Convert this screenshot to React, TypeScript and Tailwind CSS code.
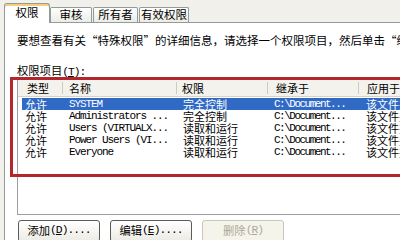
import React from "react";

const rows = [
  { t: "允许", n: "SYSTEM", p: "完全控制", sel: true },
  { t: "允许", n: "Administrators ...", p: "完全控制" },
  { t: "允许", n: "Users (VIRTUALX...", p: "读取和运行" },
  { t: "允许", n: "Power Users (VI...", p: "读取和运行" },
  { t: "允许", n: "Everyone", p: "读取和运行" },
];

function Btn({ label, k, dots, disabled }: { label: string; k: string; dots?: boolean; disabled?: boolean }) {
  return (
    <div
      className={
        "w-[82px] h-[22px] rounded-[3px] border flex items-center justify-center text-[11.3px] leading-none " +
        (disabled
          ? "border-[#c9c7ba] bg-[#f5f4ea] text-[#aca899]"
          : "border-[#5a5a5a] bg-gradient-to-b from-white to-[#ecebe4] text-black")
      }
    >
      <span>{label}</span>
      <span className="font-['Liberation_Mono',monospace] tracking-[-1px]">
        (<span className="underline">{k}</span>){dots ? "...." : ""}
      </span>
    </div>
  );
}

export default function App() {
  return (
    <div className="relative w-[400px] h-[240px] overflow-hidden bg-[#f1f0ea] text-black font-['Noto_Sans_CJK_SC',sans-serif]">
      {/* tab strip */}
      <div className="relative z-10 flex items-end h-[23px] pl-[4px] text-[11.5px] leading-none">
        <div className="w-[46px] h-[20px] bg-white border-x border-t border-[#919b9c] rounded-t-[3px] flex items-center justify-center pb-[1px] shadow-[inset_0_2px_0_#f3cf7a]">
          权限
        </div>
        <div className="w-[42px] h-[15px] mb-[1px] bg-gradient-to-b from-white to-[#ecebe4] border-x border-t border-[#919b9c] rounded-t-[2px] flex items-center justify-center">
          审核
        </div>
        <div className="w-[45px] h-[15px] mb-[1px] ml-[1px] bg-gradient-to-b from-white to-[#ecebe4] border-x border-t border-[#919b9c] rounded-t-[2px] flex items-center justify-center">
          所有者
        </div>
        <div className="w-[50px] h-[15px] mb-[1px] ml-[1px] bg-gradient-to-b from-white to-[#ecebe4] border-x border-t border-[#919b9c] rounded-t-[2px] flex items-center justify-center">
          有效权限
        </div>
      </div>

      {/* panel */}
      <div className="-mt-[1px] ml-[4px] w-[520px] h-[230px] border-l border-t border-[#919b9c] bg-white pl-[12px] pt-[10px]">
        <div className="h-[14px] leading-[14px] text-[11.5px] whitespace-nowrap">
          要想查看有关“特殊权限”的详细信息，请选择一个权限项目，然后单击“编辑”。
        </div>
        <div className="mt-[16px] h-[14px] leading-[14px] text-[11.3px] whitespace-nowrap">
          权限项目<span className="font-['Liberation_Mono',monospace] tracking-[-1px]">(<span className="underline">T</span>):</span>
        </div>
        <div className="mt-[2px] h-[136px] border border-[#9aa0a8] bg-white text-[11px] leading-[12px]">
          {/* header */}
          <div className="flex h-[17px] items-center bg-[#f3f2ec] border-b border-[#d6d3c6] whitespace-nowrap">
            <div className="w-[45px] pl-[9px] border-r border-[#cfccbf] h-[12px]">类型</div>
            <div className="w-[114px] pl-[6px] border-r border-[#cfccbf] h-[12px]">名称</div>
            <div className="w-[91px] pl-[5px] border-r border-[#cfccbf] h-[12px]">权限</div>
            <div className="w-[91px] pl-[8px] border-r border-[#cfccbf] h-[12px]">继承于</div>
            <div className="pl-[8px] h-[12px]">应用于</div>
          </div>
          <div className="pt-[1px]">
            {rows.map((r, i) => (
              <div key={i} className="flex h-[12px] items-center whitespace-nowrap pl-[4px]">
                <div className={"flex h-[12px] items-center flex-1 " + (r.sel ? "bg-[#316ac5] text-white" : "")}>
                  <div className="w-[41px] pl-[3px]">{r.t}</div>
                  <div className="w-[114px] pl-[6px] font-['Liberation_Mono',monospace] tracking-[-1.1px]">{r.n}</div>
                  <div className="w-[91px] pl-[6px]">{r.p}</div>
                  <div className="w-[91px] pl-[6px] font-['Liberation_Mono',monospace] tracking-[-1.5px]">C:\Document...</div>
                  <div className="pl-[7px]">该文件夹，子文件夹及文件</div>
                </div>
              </div>
            ))}
          </div>
        </div>
        <div className="mt-[5px] ml-[1px] flex gap-[10px]">
          <Btn label="添加" k="D" dots />
          <Btn label="编辑" k="E" dots />
          <Btn label="删除" k="R" disabled />
        </div>
      </div>

      {/* red annotation box */}
      <div className="absolute left-[10px] top-[77px] w-[420px] h-[100px] border-[3px] border-[#b3262b]" />
    </div>
  );
}
